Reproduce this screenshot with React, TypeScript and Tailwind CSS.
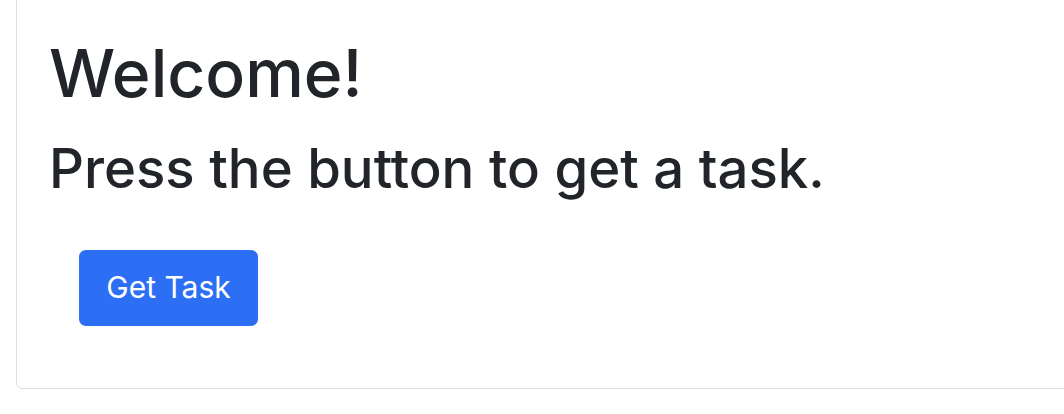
export default function App() {
  return (
    <div className="w-[1064px] h-[414px] overflow-hidden bg-white" style={{ fontFamily: 'Inter, "Liberation Sans", Arial, sans-serif' }}>
      <div className="ml-[16px] mt-[-8px] w-[1070px] border border-[#dedede] rounded-[6px] pt-[41px] pb-[62px] pl-[32px]">
        <h1 className="text-[66px] leading-[1.2] font-medium text-[#212529] mb-[23px]">Welcome!</h1>
        <h2 className="text-[54.5px] leading-[1.2] font-medium text-[#212529]">Press the button to get a task.</h2>
        <button className="mt-[48px] ml-[30px] w-[179px] h-[76px] rounded-[7px] bg-[#2c6ff5] text-white text-[30px] flex items-center justify-center">
          Get Task
        </button>
      </div>
    </div>
  );
}
